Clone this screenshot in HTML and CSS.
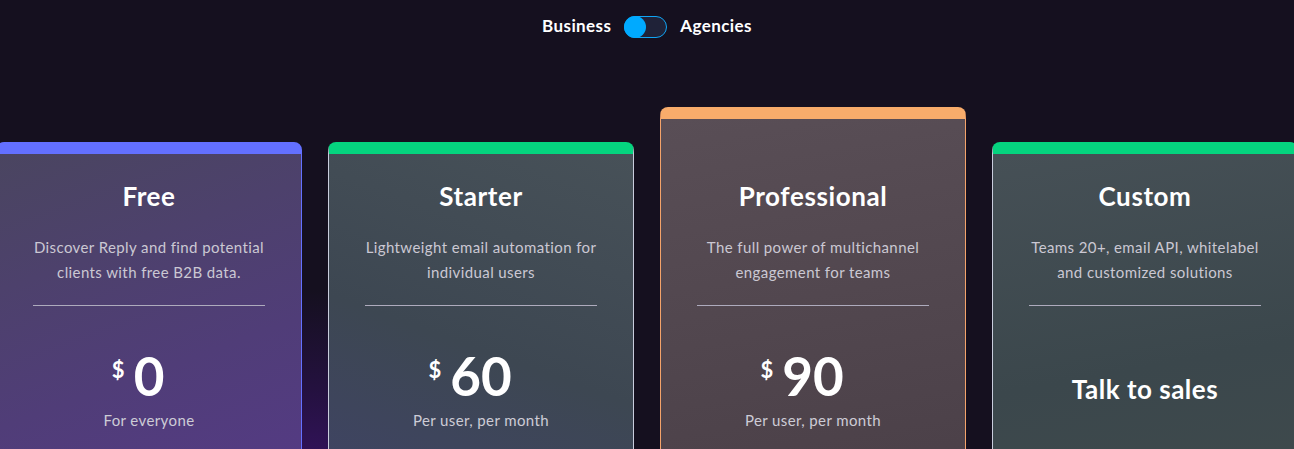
FILE: index.html
```html
<!DOCTYPE html>
<html lang="en">
<head>
    <meta charset="UTF-8">
    <meta name="viewport" content="width=device-width, initial-scale=1">
    <title>Pricing</title>
    <link rel="stylesheet" href="styles.css">
</head>
<body>
    <div class="switcher">
        <span class="switcher-label">Business</span>
        <span class="toggle"><span class="toggle-knob"></span></span>
        <span class="switcher-label">Agencies</span>
    </div>
    <div class="plans">
        <div class="card card-free">
            <h3 class="card-title">Free</h3>
            <p class="card-desc">Discover Reply and find potential clients with free B2B data.</p>
            <hr class="card-line">
            <div class="price"><span class="price-num"><span class="price-cur">$</span>0</span></div>
            <p class="price-note">For everyone</p>
        </div>
        <div class="card card-starter">
            <h3 class="card-title">Starter</h3>
            <p class="card-desc">Lightweight email automation for individual users</p>
            <hr class="card-line">
            <div class="price"><span class="price-num"><span class="price-cur">$</span>60</span></div>
            <p class="price-note">Per user, per month</p>
        </div>
        <div class="card card-pro">
            <h3 class="card-title">Professional</h3>
            <p class="card-desc">The full power of multichannel engagement for teams</p>
            <hr class="card-line">
            <div class="price"><span class="price-num"><span class="price-cur">$</span>90</span></div>
            <p class="price-note">Per user, per month</p>
        </div>
        <div class="card card-custom">
            <h3 class="card-title">Custom</h3>
            <p class="card-desc">Teams 20+, email API, whitelabel and customized solutions</p>
            <hr class="card-line">
            <div class="sales">Talk to sales</div>
        </div>
    </div>
</body>
</html>
```

FILE: styles.css
```css
html, body { height: 100%; }
body {
    margin: 0;
    overflow: hidden;
    font-family: Lato, "Noto Sans", sans-serif;
    color: #fff;
    background: radial-gradient(ellipse 260px 180px at 312px 470px, #34135e 0%, #24113f 45%, rgba(21, 16, 31, 0) 100%), #15101f;
}

.switcher { display: flex; justify-content: center; align-items: center; gap: 13px; padding-top: 15px; height: 23px; }
.switcher-label { font-size: 17px; font-weight: 700; letter-spacing: 0.4px; margin-top: -2px; }
.toggle {
    width: 43px; height: 22px; box-sizing: border-box;
    border: 1px solid #10a5f5; border-radius: 12px;
    background: #1f2238; display: flex; align-items: center;
}
.toggle-knob { width: 22px; height: 22px; margin-left: -1px; border-radius: 50%; background: #00aaff; }

.plans { display: flex; justify-content: center; gap: 26px; padding-top: 69px; }
.card {
    flex: 0 0 306px; box-sizing: border-box; height: 360px;
    margin-top: 35px; padding: 26px 36px 0;
    border: 1px solid #c9cddd; border-top-width: 12px;
    border-radius: 8px; text-align: center;
}
.card-free { border-color: #6370ff; background: linear-gradient(160deg, #4a4560 0%, #503d78 60%, #553a86 100%); }
.card-starter { border-top-color: #05d47f; background: linear-gradient(200deg, #475158 0%, #3d4752 55%, #3f4366 100%); }
.card-pro {
    margin-top: 0; padding-top: 61px; height: 395px;
    border-color: #f4a36a; border-top-color: #f8ac6b;
    background: linear-gradient(170deg, #594e56 0%, #4a3f47 100%);
}
.card-custom { border-top-color: #05d47f; background: linear-gradient(170deg, #465056 0%, #3b474c 60%, #3f4a4c 100%); }

.card-title { margin: 0; font-size: 26px; line-height: 32px; font-weight: 700; letter-spacing: 0.6px; }
.card-desc { margin: 23px -6px 0; font-size: 15px; line-height: 25px; color: #cbc8d3; letter-spacing: 0.4px; }
.card-line { margin: 20px 0 0; border: 0; border-top: 1px solid #aeabbd; }

.price { display: flex; justify-content: center; margin-top: 40px; height: 60px; }
.price-num { position: relative; font-size: 53px; font-weight: 700; line-height: 60px; }
.price-cur { position: absolute; right: 100%; top: 13px; margin-right: 9px; font-size: 22px; line-height: 22px; }
.price-note { margin: 3px 0 0; font-size: 15px; line-height: 22px; color: #cdccd6; letter-spacing: 0.4px; }

.sales { margin-top: 67px; font-size: 26px; line-height: 32px; font-weight: 700; letter-spacing: 0.5px; }
```
